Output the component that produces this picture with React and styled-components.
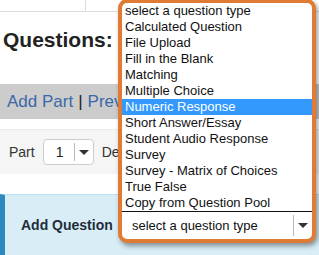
import styled, { createGlobalStyle } from "styled-components";

const GlobalStyle = createGlobalStyle`
    body {
        margin: 0;
        background: #ffffff;
    }
`;

const questionTypes = [
    'select a question type',
    'Calculated Question',
    'File Upload',
    'Fill in the Blank',
    'Matching',
    'Multiple Choice',
    'Numeric Response',
    'Short Answer/Essay',
    'Student Audio Response',
    'Survey',
    'Survey - Matrix of Choices',
    'True False',
    'Copy from Question Pool',
];

export default function App() {
    return (
        <Page>
            <GlobalStyle />
            <TopRow>
                <TopCell />
            </TopRow>
            <Heading>Questions:</Heading>
            <ActionBar>
                <ActionLink>Add Part</ActionLink>
                <Pipe>|</Pipe>
                <ActionLink>Preview</ActionLink>
            </ActionBar>
            <PartRow>
                <span>Part</span>
                <SmallSelect>
                    <SmallValue>1</SmallValue>
                    <Sep />
                    <ArrowBox><Arrow /></ArrowBox>
                </SmallSelect>
                <span>Default</span>
            </PartRow>
            <InfoBand>
                <strong>Add Question</strong>
            </InfoBand>

            <Dropdown>
                {questionTypes.map((t, i) => (
                    <Option key={t} $active={i === 6}>{t}</Option>
                ))}
                <Divider />
                <SelectRow>
                    <SelectText>select a question type</SelectText>
                    <Sep />
                    <ArrowBox><Arrow /></ArrowBox>
                </SelectRow>
            </Dropdown>
        </Page>
    );
}

const Page = styled.div`
    position: relative;
    width: 319px;
    height: 255px;
    overflow: hidden;
    background: #ffffff;
    font-family: "Liberation Sans", Arial, sans-serif;
    color: #222;
`;

const TopRow = styled.div`
    display: flex;
    height: 11px;
    border-bottom: 1px solid #dddddd;
`;

const TopCell = styled.div`
    width: 85px;
    border-right: 1px solid #dddddd;
`;

const Heading = styled.h2`
    margin: 0;
    padding: 16px 0 0 3px;
    font-size: 21px;
    font-weight: bold;
    line-height: 24px;
    white-space: nowrap;
    color: #222;
`;

const ActionBar = styled.div`
    display: flex;
    align-items: center;
    height: 35px;
    margin-top: 32px;
    padding-left: 7px;
    background: #cccccc;
    font-size: 17px;
    white-space: nowrap;
`;

const ActionLink = styled.span`
    color: #3a68a8;
`;

const Pipe = styled.span`
    margin: 0 5px;
    color: #222;
`;

const PartRow = styled.div`
    display: flex;
    align-items: center;
    gap: 8px;
    height: 44px;
    margin-top: 10px;
    padding-left: 9px;
    border-top: 1px solid #ececec;
    background: #f5f5f5;
    font-size: 14px;
    color: #333;
    white-space: nowrap;
`;

const SmallSelect = styled.div`
    display: flex;
    align-items: stretch;
    width: 51px;
    height: 26px;
    box-sizing: border-box;
    border: 1px solid #cccccc;
    border-radius: 4px;
    background: #ffffff;
`;

const SmallValue = styled.span`
    flex: 1;
    padding-left: 12px;
    line-height: 24px;
    color: #222;
`;

const Sep = styled.div`
    width: 1px;
    margin: 3px 0;
    background: #b8b8b8;
`;

const ArrowBox = styled.div`
    display: flex;
    align-items: center;
    justify-content: center;
    width: 18px;
`;

const Arrow = styled.div`
    width: 0;
    height: 0;
    border-left: 5px solid transparent;
    border-right: 5px solid transparent;
    border-top: 5px solid #333;
`;

const InfoBand = styled.div`
    display: flex;
    align-items: center;
    height: 60px;
    margin-top: 20px;
    padding-left: 16px;
    border-left: 5px solid #2d8ac0;
    border-top: 1px solid #bfe0f0;
    background: #d9edf7;
    font-size: 14px;
    color: #1f2d3a;
`;

const Dropdown = styled.div`
    position: absolute;
    left: 118px;
    top: -1px;
    width: 198px;
    box-sizing: border-box;
    border: 4px solid #e07b35;
    border-radius: 9px;
    background: #ffffff;
    box-shadow: 2px 3px 5px rgba(0, 0, 0, 0.4);
    overflow: hidden;
    font-size: 13px;
`;

const Option = styled.div`
    height: 16px;
    line-height: 16px;
    padding-left: 3px;
    white-space: nowrap;
    color: ${(p) => (p.$active ? '#ffffff' : '#111111')};
    background: ${(p) => (p.$active ? '#3399ff' : 'transparent')};
`;

const Divider = styled.div`
    height: 1px;
    background: #111111;
`;

const SelectRow = styled.div`
    display: flex;
    align-items: stretch;
    height: 27px;
    padding-left: 10px;
`;

const SelectText = styled.span`
    flex: 1;
    line-height: 27px;
    color: #111;
    white-space: nowrap;
`;
